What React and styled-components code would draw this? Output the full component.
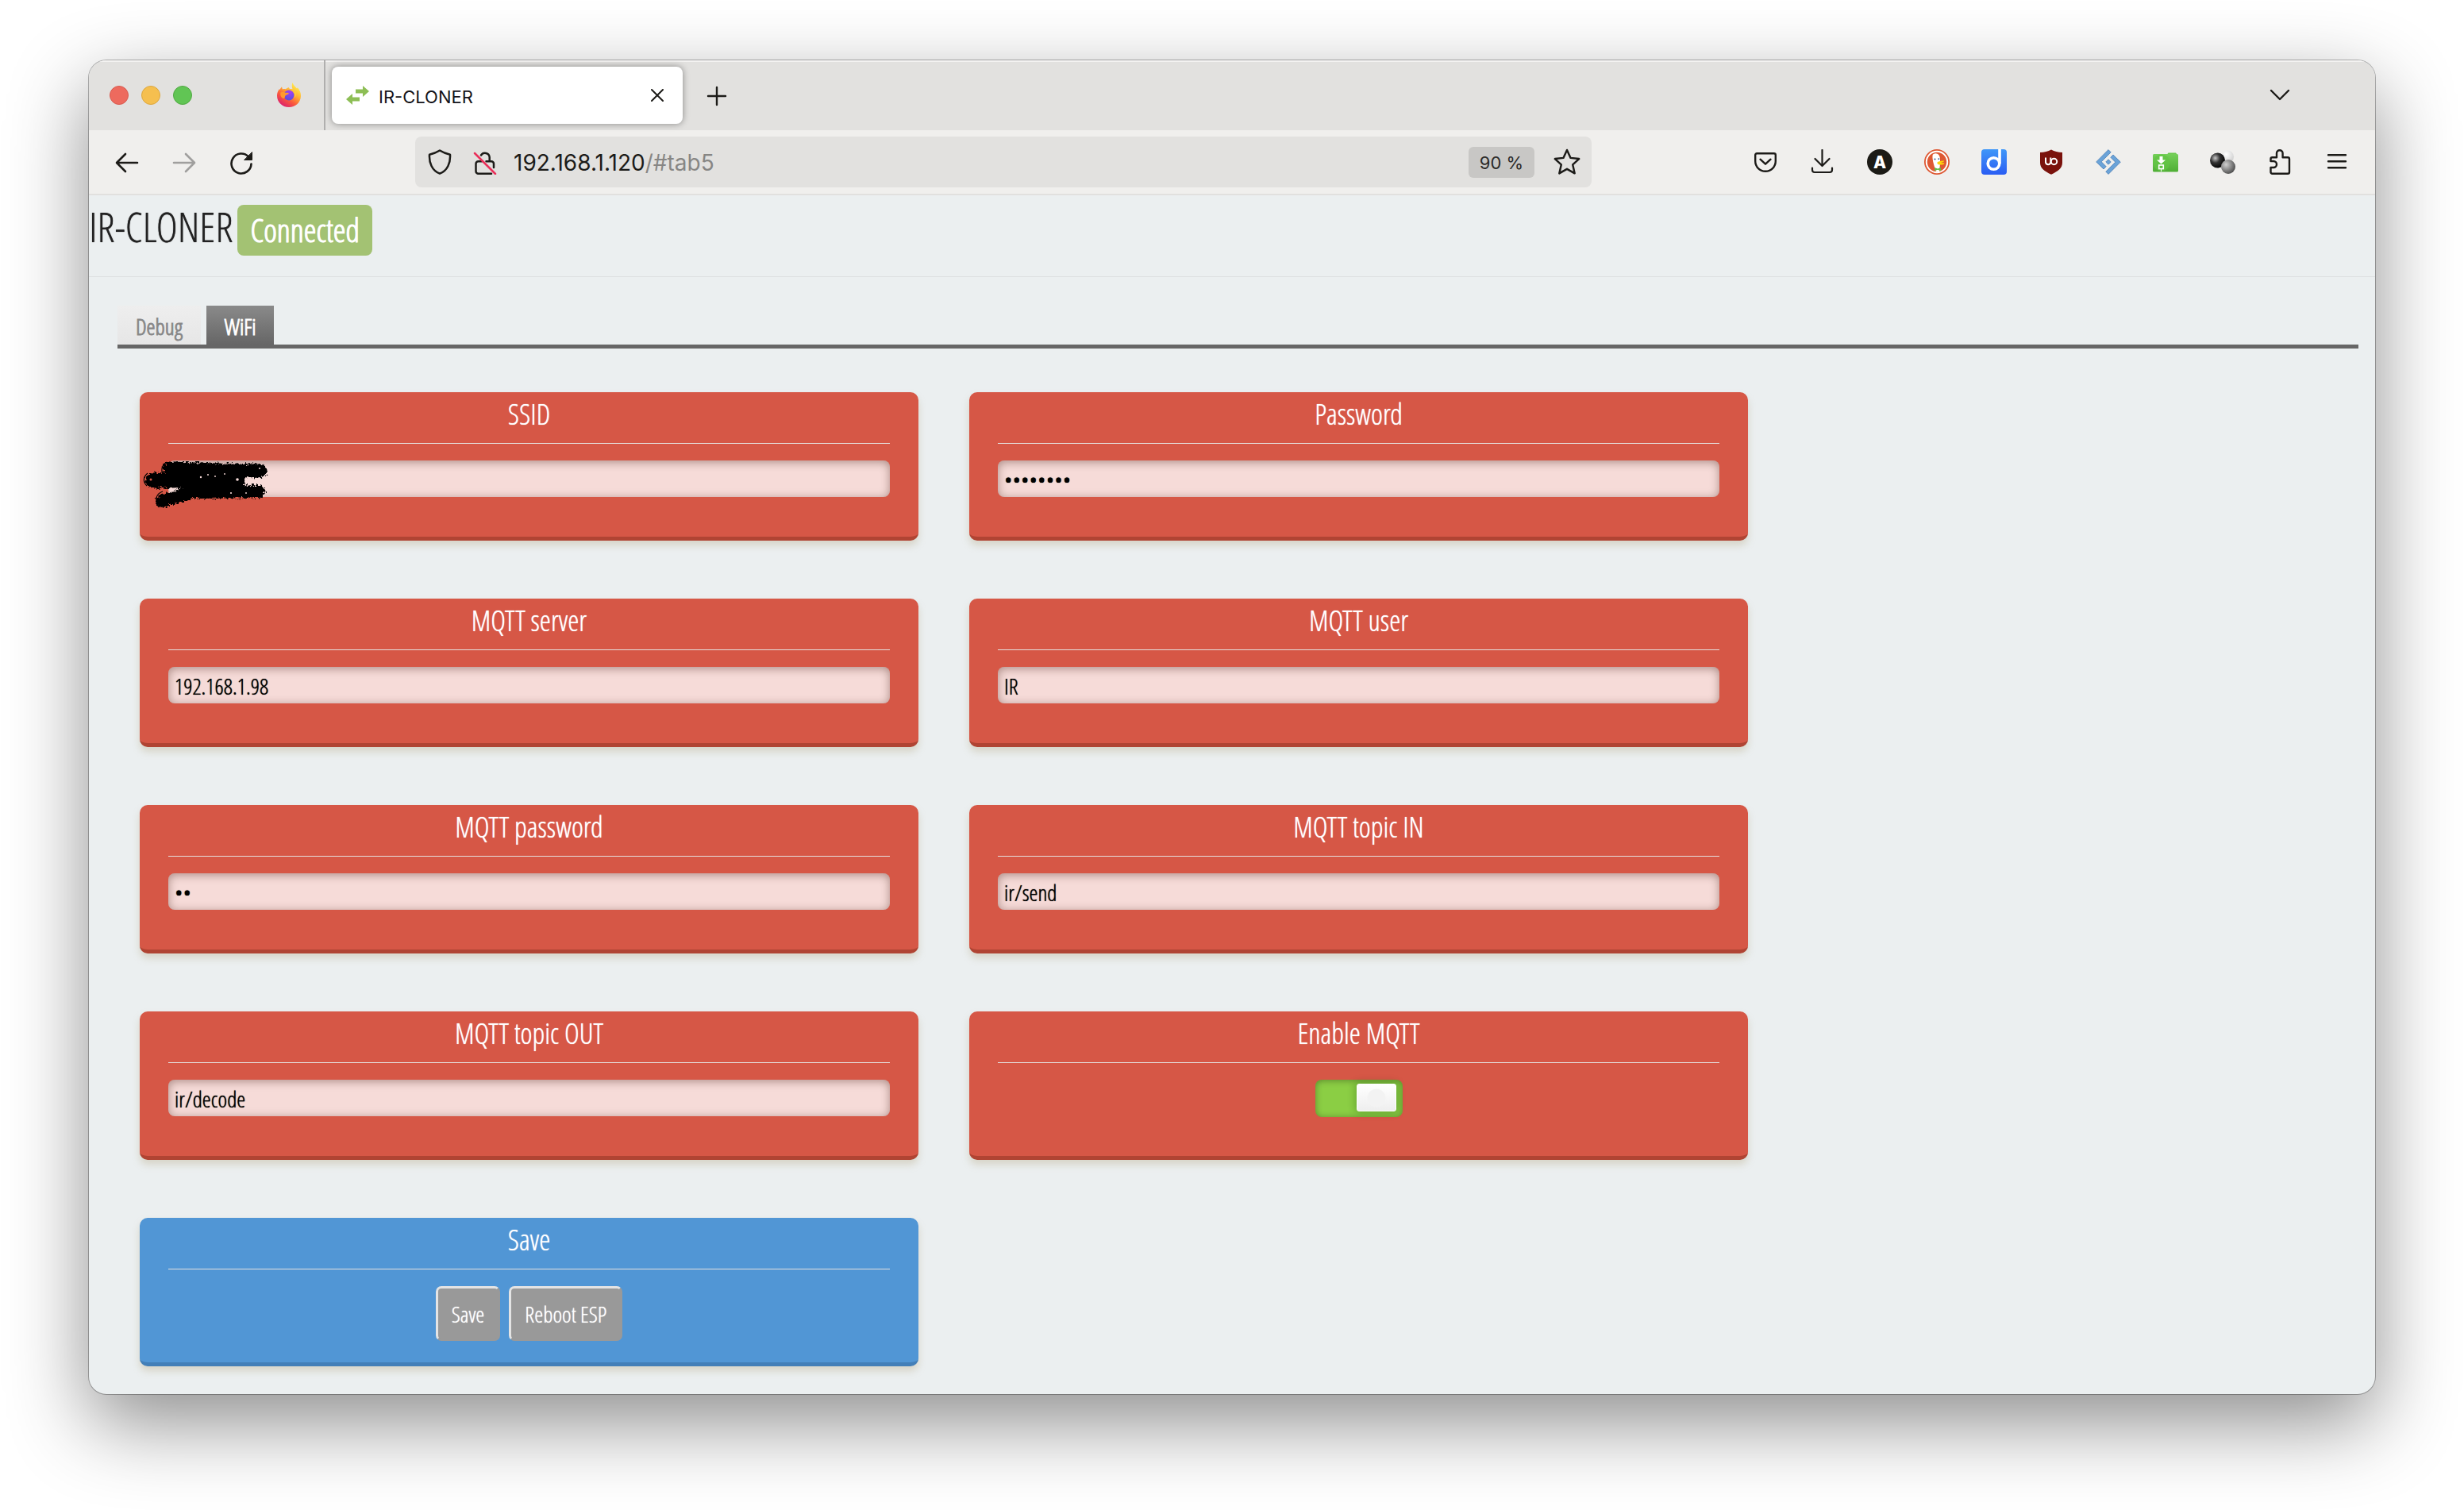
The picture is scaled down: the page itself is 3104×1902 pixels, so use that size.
import React from 'react';
import styled, { createGlobalStyle, css } from 'styled-components';

const ui = "Inter, 'Liberation Sans', sans-serif";
const condensed = "'Open Sans Condensed Light', 'Open Sans', sans-serif";

const GlobalStyle = createGlobalStyle`
  *, *::before, *::after { box-sizing: border-box; }
  body { margin: 0; background: #fff; }
  button, input { font: inherit; color: inherit; text-shadow: inherit; }
  h1, h2 { margin: 0; font-weight: 400; }
`;

const Desktop = styled.div`
  min-height: 100vh;
  padding: 76px 112px 148px;
`;

const Window = styled.div`
  border-radius: 22px;
  overflow: hidden;
  background: #ebeff0;
  box-shadow: 0 0 0 1px rgba(0, 0, 0, 0.28), 0 36px 100px rgba(0, 0, 0, 0.45);
`;

/* Browser chrome */

const TabStrip = styled.div`
  display: flex;
  align-items: center;
  height: 88px;
  padding-left: 26px;
  background: #e2e1df;
  box-shadow: inset 0 2px 0 #f3f2f1;
  font-family: ${ui};
`;

const Lights = styled.div`
  display: flex;
  gap: 16px;
`;

const Light = styled.span`
  width: 24px;
  height: 24px;
  border-radius: 50%;
  background: ${(p) => p.$fill};
  border: 1px solid ${(p) => p.$edge};
`;

const PinnedTab = styled.button`
  display: flex;
  margin-left: 106px;
  padding: 0;
  border: 0;
  background: none;
`;

const Separator = styled.span`
  align-self: stretch;
  width: 2px;
  margin: 0 8px 0 28px;
  background: #b0afae;
`;

const ActiveTab = styled.div`
  display: flex;
  align-items: center;
  width: 442px;
  height: 72px;
  padding: 0 24px 0 18px;
  border-radius: 8px;
  background: #fff;
  box-shadow: 0 0 8px rgba(0, 0, 0, 0.4);
  font-size: 22px;
  line-height: 28px;
  color: #15141a;
`;

const TabTitle = styled.span`
  flex: 1;
  margin-left: 12px;
  padding-top: 3px;
`;

const IconButton = styled.button`
  display: flex;
  align-items: center;
  justify-content: center;
  width: ${(p) => p.$size || 32}px;
  height: ${(p) => p.$size || 32}px;
  padding: 0;
  border: 0;
  background: none;
  color: ${(p) => (p.$muted ? '#a09f9e' : '#1c1b18')};
`;

const NewTab = styled(IconButton)`
  margin-left: 27px;
`;

const ListTabs = styled(IconButton)`
  margin: 0 104px 0 auto;
`;

const Toolbar = styled.div`
  display: flex;
  align-items: center;
  height: 82px;
  padding: 0 32px;
  background: #f0efed;
  border-bottom: 2px solid #e1e0de;
  font-family: ${ui};
`;

const NavButtons = styled.div`
  display: flex;
  gap: 40px;
`;

const UrlBar = styled.div`
  display: flex;
  align-items: center;
  flex: 1;
  height: 64px;
  margin: 0 203px 0 203px;
  padding: 0 14px;
  border-radius: 8px;
  background: #e2e1df;
`;

const Url = styled.span`
  flex: 1;
  margin-left: 20px;
  padding-top: 2px;
  font-size: 28px;
  line-height: 36px;
  color: #1c1b18;
`;

const UrlPath = styled.span`
  color: #878684;
`;

const ZoomLevel = styled.button`
  width: 83px;
  height: 39px;
  margin-right: 24px;
  padding: 0;
  border: 0;
  border-radius: 6px;
  background: #c8c7c5;
  font-size: 22px;
  line-height: 40px;
  color: #2b2a28;
`;

const SiteButton = styled(IconButton)`
  & + & { margin-left: 24px; }
`;

const Extensions = styled.div`
  display: flex;
  gap: 40px;
`;

/* Page */

const PageHeader = styled.header`
  display: flex;
  align-items: baseline;
  gap: 6px;
  height: 103px;
  padding-top: 7px;
  border-bottom: 1px solid #dddfe0;
  font-family: ${condensed};
  text-shadow: 0 0 1px currentColor;
`;

const PageTitle = styled.h1`
  font-size: 52px;
  line-height: 64px;
  color: #222;
`;

const Status = styled.span`
  padding: 0 16px;
  border-radius: 8px;
  background: #a3c273;
  font-size: 40px;
  line-height: 64px;
  color: #fff;
  -webkit-text-stroke: 1px currentColor;
`;

const TabNav = styled.nav`
  display: flex;
  gap: 7px;
  margin: 36px 21px 0 36px;
  border-bottom: 5px solid #666;
  font-family: ${condensed};
`;

const PageTab = styled.a`
  height: 49px;
  padding: 0 23px;
  font-size: 28px;
  line-height: 53px;
  text-decoration: none;
  color: #888;
  -webkit-text-stroke: 1px currentColor;
  background: linear-gradient(#eeeeee, #e6e6e6);
  ${(p) => p.$active && css`
    color: #fff;
    background: linear-gradient(#8a8a8a, #666);
  `}
`;

const Cards = styled.form`
  display: grid;
  grid-template-columns: repeat(2, minmax(0, 981px));
  gap: 73px 64px;
  padding: 55px 64px 35px;
  font-family: ${condensed};
  text-shadow: 0 0 1px currentColor;
`;

const Card = styled.section`
  height: 187px;
  padding: 0 36px;
  border-radius: 10px;
  text-align: center;
  color: #fff;
  background: ${(p) => (p.$blue ? '#5196d5' : '#d65746')};
  border-bottom: 5px solid ${(p) => (p.$blue ? '#437fb8' : '#b04433')};
  box-shadow: 0 6px 10px rgba(180, 165, 130, 0.36);
`;

const CardTitle = styled.h2`
  margin-bottom: 21px;
  padding-bottom: 8px;
  border-bottom: 1px solid #e5e0de;
  font-size: 36px;
  line-height: 56px;
`;

const CardLabel = styled.label`
  display: block;
`;

const Field = styled.div`
  position: relative;
`;

const TextInput = styled.input`
  display: block;
  width: 100%;
  height: 46px;
  padding: 2px 8px 0;
  border: 0;
  border-radius: 8px;
  outline: 0;
  background: #f6dbd8;
  box-shadow: inset 0 2px 12px rgba(60, 20, 10, 0.4);
  font-size: 28px;
  line-height: 44px;
  color: #000;
  text-shadow: 0 0 1px #000;
`;

const Scribble = styled.svg`
  position: absolute;
  left: -36px;
  top: -8px;
`;

const Switch = styled.input`
  appearance: none;
  display: block;
  width: 110px;
  height: 47px;
  margin: 0 auto;
  padding: 5px 8px 7px;
  border-radius: 8px;
  background: #8bce44;
  box-shadow: inset 0 1px 8px rgba(0, 0, 0, 0.35);
  &::before {
    content: '';
    display: block;
    width: 50px;
    height: 35px;
    border: 1px solid #fff;
    border-radius: 3px;
    background:
      radial-gradient(circle at 50% 52%, #f3f3f3 0 11px, transparent 12px),
      linear-gradient(#fff, #eee);
    box-shadow: 0 0 10px 2px rgba(0, 60, 0, 0.25);
  }
  &:checked::before { margin-left: auto; }
`;

const Actions = styled.div`
  display: flex;
  justify-content: center;
  gap: 11px;
`;

const ActionButton = styled.button`
  height: 69px;
  padding: 0 17px;
  border: 3px solid;
  border-color: #e4e4e4 #999 #999 #e4e4e4;
  border-radius: 7px;
  background: #999;
  font-size: 28px;
  line-height: 60px;
  color: #fff;
`;

/* Icons */

const Icon = ({ size = 32, width = 2.4, children }) => (
  <svg width={size} height={size} viewBox="0 0 32 32" fill="none" stroke="currentColor"
    strokeWidth={width} strokeLinecap="round" strokeLinejoin="round" aria-hidden="true">
    {children}
  </svg>
);

const Firefox = () => (
  <svg width="32" height="32" viewBox="0 0 32 32" aria-hidden="true">
    <defs>
      <linearGradient id="fxBody" x1="0.85" y1="0.1" x2="0.25" y2="1">
        <stop offset="0" stopColor="#fff04f" />
        <stop offset="0.35" stopColor="#ffb233" />
        <stop offset="0.65" stopColor="#fb5a3c" />
        <stop offset="1" stopColor="#d81b72" />
      </linearGradient>
      <radialGradient id="fxGlobe" cx="0.6" cy="0.2" r="0.9">
        <stop offset="0" stopColor="#a63df5" />
        <stop offset="1" stopColor="#4a53d8" />
      </radialGradient>
    </defs>
    <path fill="url(#fxBody)" d="M20.5 0c1 3.600 3.500 5 5.500 7.500.8-.3.700-1 .6-1.500 3 3 4.600 7 4.400 11C30.700 25.500 24 31 16 31 7.500 31 1 24.800 1 16.500c0-3.500 1.200-6 2.800-8.300L4.200 9 7 5.200l.9 3.300C9 8 10.500 8 11.700 8.200L15.500 6 17 8c1.500-.3 3 0 3.500.3C19.500 5.500 19.500 2.500 20.500 0z" />
    <circle cx="16" cy="16" r="6.500" fill="url(#fxGlobe)" />
    <path fill="#ff9a2e" d="M5.500 12.500c2.500-1.500 5-.8 6.500.5 1.500-.4 3.500 0 4 .8-1 1.700-3.500 1.400-4.500 2.700-.8 1.500-.5 3-2 3.500-3 0-5-4-4-7.500z" />
    <path fill="#ffcb3a" d="M19 8.500c4 2 5 7.500 3.300 10.800 2.500-1 3.700-4 3-6.800-1-2.500-3.500-4.500-6.300-4z" opacity="0.8" />
  </svg>
);

const Arrows = () => (
  <svg width="29" height="24" viewBox="0 0 29 24" fill="#8dbe55" aria-hidden="true">
    <path d="M12 4.500h9V0l8 7-8 7V9.500h-9z" />
    <path d="M17 14.500H8V10L0 17l8 7v-4.500h9z" />
  </svg>
);

const Pocket = () => (
  <Icon><path d="M5.200 5.200h21.600a2 2 0 0 1 2 2V15a12.800 12.800 0 0 1-25.600 0V7.200a2 2 0 0 1 2-2z" /><path d="M9.500 12.700l6.500 6 6.500-6" /></Icon>
);
const Download = () => (
  <Icon width={2.200}><path d="M15.500 1v19.500M6.500 12l9 9 9-9M3 23.500V26a3 3 0 0 0 3 3h19a3 3 0 0 0 3-3v-2.500" /></Icon>
);
const LetterA = () => (
  <svg width="32" height="32" viewBox="0 0 32 32" aria-hidden="true">
    <circle cx="16" cy="16" r="16" fill="#1c1b16" />
    <text x="16" y="23.500" textAnchor="middle" fontFamily="Inter, sans-serif" fontWeight="800" fontSize="21" fill="#fff">A</text>
  </svg>
);
const Duck = () => (
  <svg width="32" height="32" viewBox="0 0 32 32" aria-hidden="true">
    <circle cx="16" cy="16" r="16" fill="#de5833" />
    <circle cx="16" cy="16" r="13.200" fill="none" stroke="#fff" strokeWidth="2" />
    <path fill="#fff" d="M10.500 8c0-2 3-3 5-2.500 3 .5 4.500 3.500 4.500 7v6l-1 9.500-4 .3C13 22 10 14 10.500 8z" />
    <circle cx="13.500" cy="12.500" r="1" fill="#2d4f8e" />
    <circle cx="18.300" cy="12.200" r="0.900" fill="#2d4f8e" />
    <path fill="#fdd20a" d="M17 16c2.500-1.500 6-1.500 8-1.500 1 .8-2 2-4 2.500 1.500.5 4 0 4.500.7-.5 1.800-5.500 2.500-8 1.300-1.300-.8-1.500-2-.5-3z" />
    <path fill="#65bc46" d="M13 23l4 1.500L21 23v4.200l-4-1.400-4 1.400z" />
  </svg>
);
const BlueD = () => (
  <svg width="32" height="32" viewBox="0 0 32 32" aria-hidden="true">
    <defs><linearGradient id="dBlue" x1="0" y1="0" x2="0" y2="1"><stop offset="0" stopColor="#3f97f8" /><stop offset="1" stopColor="#2a5df3" /></linearGradient></defs>
    <rect width="32" height="32" rx="4" fill="url(#dBlue)" />
    <circle cx="15.500" cy="18" r="7.300" fill="none" stroke="#fff" strokeWidth="3.600" />
    <path d="M23 0v18" stroke="#fff" strokeWidth="3.600" />
  </svg>
);
const Shield = () => (
  <svg width="32" height="32" viewBox="0 0 32 32" aria-hidden="true">
    <path fill="#7a120c" d="M16 0.500c4 2.500 8.500 3.300 14 3.500v13c0 6.500-5 10.500-14 14.800C7 27.500 2 23.500 2 17V4c5.500-.2 10-1 14-3.500z" />
    <path d="M9 10.500v6a3.200 3.200 0 0 0 6.300 0v-6M15.300 18.500v-4" fill="none" stroke="#fff" strokeWidth="2" />
    <circle cx="19.500" cy="15.500" r="3.700" fill="none" stroke="#fff" strokeWidth="2" />
  </svg>
);
const Diamond = () => (
  <svg width="32" height="32" viewBox="0 0 32 32" fill="#6ba3d8" stroke="#4c7fb5" strokeWidth="0.800" aria-hidden="true">
    <path d="M16 0.600l3.200 3.200L7.200 15.800l6 6L10 25 0.700 15.900z" />
    <path d="M16 31.400l-3.200-3.200L24.800 16.200l-6-6L22 7l9.300 9.100z" />
    <path d="M16 12.800l3.200 3.200-3.200 3.200-3.200-3.200z" />
  </svg>
);
const Folder = () => (
  <svg width="32" height="32" viewBox="0 0 32 32" aria-hidden="true">
    <defs><linearGradient id="folder" x1="0" y1="0" x2="0" y2="1"><stop offset="0" stopColor="#74cf58" /><stop offset="1" stopColor="#4fae35" /></linearGradient></defs>
    <path fill="#69c84c" d="M18 6.500l1.500-2H29l1.500 2V9H18z" />
    <rect x="0" y="6" width="32" height="22.500" rx="1.500" fill="url(#folder)" />
    <circle cx="11" cy="17" r="10.500" fill="#62c444" opacity="0.700" />
    <path fill="#fff" d="M8.500 9h4v4.500H16l-5.500 5-5.500-5h3.500z" />
    <rect x="7.700" y="20" width="5.600" height="4.600" fill="none" stroke="#fff" strokeWidth="1.600" />
    <path d="M10.500 25v3" stroke="#fff" strokeWidth="1" />
  </svg>
);
const Balls = () => (
  <svg width="32" height="32" viewBox="0 0 32 32" aria-hidden="true">
    <defs>
      <radialGradient id="bk" cx="0.350" cy="0.350" r="0.700"><stop offset="0" stopColor="#c8c8c8" /><stop offset="0.450" stopColor="#333" /><stop offset="1" stopColor="#000" /></radialGradient>
      <radialGradient id="wh" cx="0.400" cy="0.300" r="0.700"><stop offset="0" stopColor="#fff" /><stop offset="1" stopColor="#cfcfcf" /></radialGradient>
      <radialGradient id="gr" cx="0.350" cy="0.350" r="0.700"><stop offset="0" stopColor="#d0d0d0" /><stop offset="1" stopColor="#4c4c4c" /></radialGradient>
    </defs>
    <circle cx="22" cy="9.500" r="8" fill="url(#wh)" />
    <circle cx="9.500" cy="14" r="9.500" fill="url(#bk)" />
    <circle cx="23" cy="22" r="9" fill="url(#gr)" />
  </svg>
);
const Puzzle = () => (
  <Icon><path d="M4.500 15v-2.800a2 2 0 0 1 2-2H12V5a3.800 3.800 0 0 1 7.600 0v5.200H26a2 2 0 0 1 2 2v16.600a2 2 0 0 1-2 2H6.500a2 2 0 0 1-2-2V23H8a4 4 0 0 0 0-8z" /></Icon>
);
const Menu = () => (
  <Icon><path d="M5 7.300h22M5 15.300h22M5 23.300h22" /></Icon>
);

const extensions = [
  ['Save to Pocket', Pocket], ['Downloads', Download], ['Account', LetterA],
  ['DuckDuckGo', Duck], ['Dictionary', BlueD], ['uBlock', Shield],
  ['Diamond', Diamond], ['Save folder', Folder], ['Spheres', Balls],
  ['Extensions', Puzzle], ['Menu', Menu],
];

const Redaction = () => (
  <Scribble width="180" height="72" viewBox="176 572 180 72" aria-hidden="true">
    <defs>
      <filter id="rough" x="-10%" y="-20%" width="120%" height="140%">
        <feTurbulence type="fractalNoise" baseFrequency="0.350" numOctaves="3" seed="4" result="n" />
        <feDisplacementMap in="SourceGraphic" in2="n" scale="9" xChannelSelector="R" yChannelSelector="G" />
      </filter>
    </defs>
    <g filter="url(#rough)" fill="none" stroke="#000" strokeLinecap="round" strokeLinejoin="round">
      <path strokeWidth="17" d="M214 590l60 2 54 1" />
      <path strokeWidth="19" d="M193 605l60 1 47-2" />
      <path strokeWidth="16" d="M204 631l38-11 84-1" />
      <path strokeWidth="22" d="M240 611l45-2" />
    </g>
    <g fill="none" stroke="#000" strokeWidth="1.200">
      <path d="M210 582c-7 4-8 12-3 18M186 596c-6 5-6 11-1 16M205 619c-9 3-11 13-4 18 6 3 10-1 12-5" />
    </g>
    <g fill="#f6dbd8">
      <circle cx="253" cy="601" r="1.200" /><circle cx="262" cy="598" r="1" /><circle cx="299" cy="604" r="1.800" />
      <circle cx="327" cy="590" r="1" /><circle cx="283" cy="597" r="0.900" />
      <circle cx="271" cy="600" r="0.900" /><circle cx="291" cy="621" r="1.100" /><circle cx="310" cy="621" r="0.900" />
      <path d="M213 615l12-1-7 4 5 1-9 1z" />
    </g>
    <circle cx="190" cy="604" r="1.500" fill="#d65746" />
  </Scribble>
);

const fields = [
  { id: 'ssid', label: 'SSID', value: '', redacted: true },
  { id: 'password', label: 'Password', value: 'password', type: 'password' },
  { id: 'mqtt-server', label: 'MQTT server', value: '192.168.1.98' },
  { id: 'mqtt-user', label: 'MQTT user', value: 'IR' },
  { id: 'mqtt-password', label: 'MQTT password', value: 'ir', type: 'password' },
  { id: 'topic-in', label: 'MQTT topic IN', value: 'ir/send' },
  { id: 'topic-out', label: 'MQTT topic OUT', value: 'ir/decode' },
];

export default function App() {
  return (
    <Desktop>
      <GlobalStyle />
      <Window>
        <TabStrip>
          <Lights>
            <Light $fill="#ed6a5e" $edge="#d85a4f" />
            <Light $fill="#f5bf4f" $edge="#dca73f" />
            <Light $fill="#61c554" $edge="#51a843" />
          </Lights>
          <PinnedTab aria-label="Firefox View"><Firefox /></PinnedTab>
          <Separator />
          <ActiveTab>
            <Arrows />
            <TabTitle>IR-CLONER</TabTitle>
            <IconButton $size={16} aria-label="Close tab">
              <Icon size={16} width={4}><path d="M2 2l28 28M30 2L2 30" /></Icon>
            </IconButton>
          </ActiveTab>
          <NewTab aria-label="New tab"><Icon><path d="M16 6v22M5 17h22" /></Icon></NewTab>
          <ListTabs aria-label="List all tabs"><Icon><path d="M5 10l11 11 11-11" /></Icon></ListTabs>
        </TabStrip>
        <Toolbar>
          <NavButtons>
            <IconButton aria-label="Back"><Icon width={2.600}><path d="M29 17H3.500M14 6L3 17l11 11" /></Icon></IconButton>
            <IconButton $muted aria-label="Forward"><Icon width={2.600}><path d="M3 17h25.500M18 6l11 11-11 11" /></Icon></IconButton>
            <IconButton aria-label="Reload">
              <Icon width={2.600}><path d="M28.500 18.500A12.500 12.500 0 1 1 25 9.300" /><path fill="currentColor" strokeWidth="1" d="M29.500 4v9.500H20z" /></Icon>
            </IconButton>
          </NavButtons>
          <UrlBar>
            <SiteButton $size={34} aria-label="Tracking protection">
              <Icon width={2.500}><path d="M16 1.500c4 2.600 8 4 13 5.200.6 10-3 20-13 24-10-4-13.600-14-13-24 5-1.200 9-2.600 13-5.200z" /></Icon>
            </SiteButton>
            <SiteButton aria-label="Connection is not secure">
              <Icon width={2.500}>
                <path d="M11 7.500a5.800 5.800 0 0 1 10.700 2.500v5M17.500 15.300H24a3 3 0 0 1 3 3V23M12 15.300H7.500a3 3 0 0 0-3 3v9.500a3 3 0 0 0 3 3H24" />
                <path stroke="#e9305a" d="M3 5l26 26" />
              </Icon>
            </SiteButton>
            <Url>192.168.1.120<UrlPath>/#tab5</UrlPath></Url>
            <ZoomLevel>90 %</ZoomLevel>
            <IconButton $size={34} aria-label="Bookmark this page">
              <Icon size={34} width={2.300}><path d="M16 1.800l4.300 9.400 10 1.100-7.500 6.900 2.300 10.300L16 24.300l-9.100 5.200 2.300-10.300-7.500-6.900 10-1.100z" /></Icon>
            </IconButton>
          </UrlBar>
          <Extensions>
            {extensions.map(([name, Glyph]) => (
              <IconButton key={name} aria-label={name}><Glyph /></IconButton>
            ))}
          </Extensions>
        </Toolbar>
        <PageHeader>
          <PageTitle>IR-CLONER</PageTitle>
          <Status>Connected</Status>
        </PageHeader>
        <TabNav>
          <PageTab href="#tab1">Debug</PageTab>
          <PageTab href="#tab5" $active>WiFi</PageTab>
        </TabNav>
        <Cards onSubmit={(e) => e.preventDefault()}>
          {fields.map((f) => (
            <Card key={f.id}>
              <CardTitle><CardLabel htmlFor={f.id}>{f.label}</CardLabel></CardTitle>
              <Field>
                <TextInput id={f.id} type={f.type || 'text'} defaultValue={f.value} />
                {f.redacted && <Redaction />}
              </Field>
            </Card>
          ))}
          <Card>
            <CardTitle><CardLabel htmlFor="enable-mqtt">Enable MQTT</CardLabel></CardTitle>
            <Switch id="enable-mqtt" type="checkbox" defaultChecked />
          </Card>
          <Card $blue>
            <CardTitle>Save</CardTitle>
            <Actions>
              <ActionButton type="submit">Save</ActionButton>
              <ActionButton type="button">Reboot ESP</ActionButton>
            </Actions>
          </Card>
        </Cards>
      </Window>
    </Desktop>
  );
}
